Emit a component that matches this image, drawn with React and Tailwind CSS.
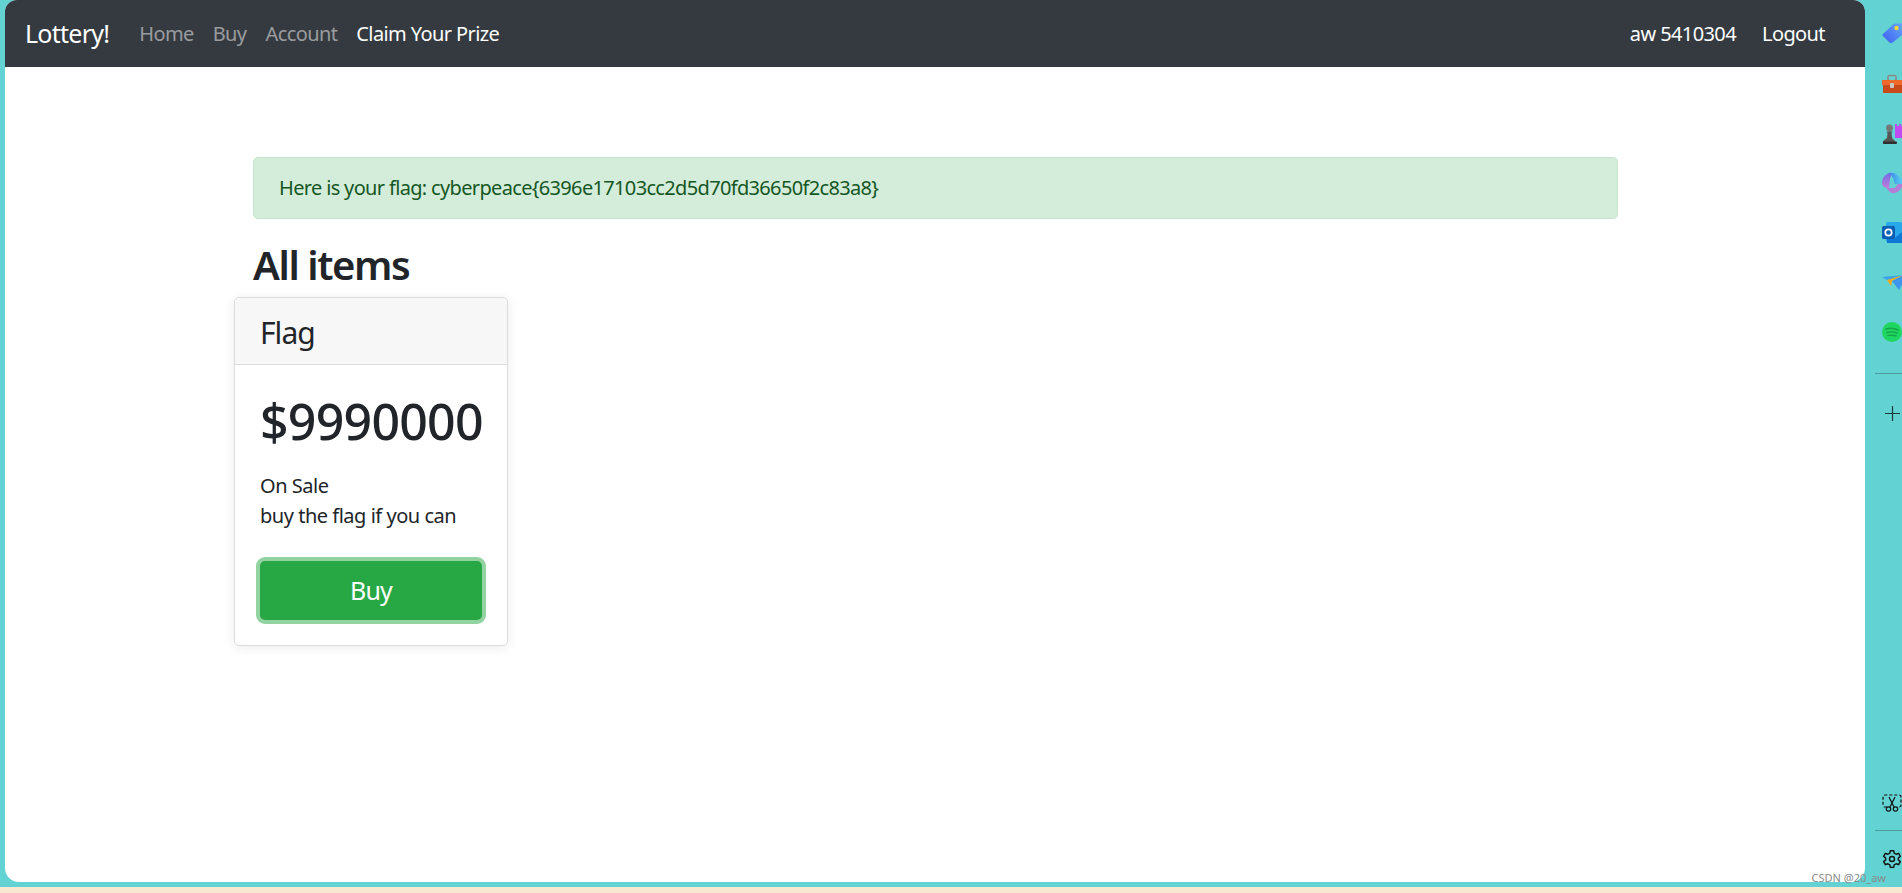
import React from "react";

const font = { fontFamily: '"Noto Sans", sans-serif' };

const TagIcon = () => (
  <svg width="20" height="20" viewBox="0 0 20 20" className="block">
    <defs>
      <linearGradient id="tagFill" x1="0" y1="1" x2="1" y2="0">
        <stop offset="0" stopColor="#3f5cf0" />
        <stop offset="1" stopColor="#62a8f8" />
      </linearGradient>
    </defs>
    <path d="M1 11 L11 1.5 Q12 .5 14 .5 L20 .5 L20 12 L10 20 Q8.5 20.5 7.5 19.5 L1 13 Q0 12 1 11Z" fill="url(#tagFill)" />
    <circle cx="14.5" cy="5" r="2.2" fill="#f7d53b" />
  </svg>
);

const ToolboxIcon = () => (
  <svg width="20" height="20" viewBox="0 0 20 20" className="block">
    <path d="M6 6 V3 Q6 1.5 7.5 1.5 H12.5 Q14 1.5 14 3 V6" fill="none" stroke="#8d8a88" strokeWidth="1.6" />
    <rect x="0" y="6" width="20" height="5" fill="#ef6a2a" />
    <rect x="1" y="11" width="19" height="8" fill="#c94b1b" />
    <rect x="8" y="9" width="4" height="5" rx="1" fill="#c9c6c4" />
  </svg>
);

const ChessIcon = () => (
  <svg width="22" height="22" viewBox="0 0 22 22" className="block">
    <path d="M13 2 L15 2 L15 4 L17 4 L17 2 L19 2 L19 4 L21 4 L22 2 V16 H13 Z" fill="#c14bf2" />
    <circle cx="7.5" cy="6" r="3.4" fill="#777" />
    <path d="M4.5 9.5 H10.5 L9.5 11 L10 16 L13 19 V22 H1 V19 L5 16 L5.5 11 Z" fill="#565656" />
    <rect x="1" y="19.5" width="14" height="2.5" rx="1" fill="#303030" />
  </svg>
);

const CopilotIcon = () => (
  <svg width="21" height="22" viewBox="0 0 21 22" className="block">
    <defs>
      <linearGradient id="copA" x1="0" y1="0" x2="0" y2="1">
        <stop offset="0" stopColor="#6f6fe8" />
        <stop offset="1" stopColor="#c27ad6" />
      </linearGradient>
      <linearGradient id="copB" x1="0" y1="0" x2="1" y2="0">
        <stop offset="0" stopColor="#3f8be8" />
        <stop offset="1" stopColor="#58d3f2" />
      </linearGradient>
    </defs>
    <path d="M0 11 Q0 5 5 2 Q8 0 10 1 L8 7 L7 16 Q0 16 0 11Z" fill="url(#copA)" />
    <path d="M8 1 Q12 0 15 3 L21 8 V12 H13 L11 6Z" fill="url(#copB)" />
    <path d="M4 16 H13 L16 12 H21 Q19 19 13 21 Q10 22 8 20Z" fill="#b37ed8" />
  </svg>
);

const OutlookIcon = () => (
  <svg width="20" height="21" viewBox="0 0 20 21" className="block">
    <rect x="4" y="0" width="16" height="19" rx="1.5" fill="#28a8ea" />
    <path d="M4 12 L13 16 L20 10 V21 H5 Z" fill="#0f78d4" />
    <rect x="0" y="4" width="13" height="13" rx="1.5" fill="#0a5fb4" />
    <circle cx="6.5" cy="10.5" r="3.2" fill="none" stroke="#fff" strokeWidth="1.7" />
  </svg>
);

const PlaneIcon = () => (
  <svg width="22" height="16" viewBox="0 0 22 16" className="block">
    <path d="M0 2 L22 0 L5 5 Z" fill="#3aa3ef" />
    <path d="M22 0 L5 5 L9 11 L10 6 Z" fill="#f0a81e" />
    <path d="M22 0 L10 6 L17 15 L22 6 Z" fill="#3d96ec" />
  </svg>
);

const SpotifyIcon = () => (
  <svg width="20" height="20" viewBox="0 0 20 20" className="block">
    <circle cx="10" cy="10" r="10" fill="#1ed760" />
    <path d="M4 7 Q10 5 16 8 M5 10.5 Q10 9 15 11 M6 13.5 Q10 12.5 14 14" fill="none" stroke="#17a34a" strokeWidth="1.4" strokeLinecap="round" />
  </svg>
);

const PlusIcon = () => (
  <svg width="15" height="15" viewBox="0 0 15 15" className="block">
    <path d="M7.5 0 V15 M0 7.5 H15" stroke="#1d3a3a" strokeWidth="1.2" />
  </svg>
);

const SnipIcon = () => (
  <svg width="20" height="19" viewBox="0 0 20 19" className="block" fill="none" stroke="#111" strokeWidth="1.2">
    <path d="M5 13 H3 Q1 13 1 11 V3 Q1 1 3 1 H17 Q19 1 19 3 V11 Q19 13 17 13 H15" strokeDasharray="3 2" />
    <path d="M7 3 L12 13 M13 3 L8 13" />
    <circle cx="6.5" cy="15" r="2.2" />
    <circle cx="13.5" cy="15" r="2.2" />
  </svg>
);

const GearIcon = () => (
  <svg width="20" height="20" viewBox="0 0 24 24" className="block" fill="none" stroke="#111" strokeWidth="1.7" strokeLinejoin="round">
    <path d="M10 2 H14 L14.6 5 L17 6.3 L20 5.2 L22 8.8 L19.6 10.8 V13.2 L22 15.2 L20 18.8 L17 17.7 L14.6 19 L14 22 H10 L9.4 19 L7 17.7 L4 18.8 L2 15.2 L4.4 13.2 V10.8 L2 8.8 L4 5.2 L7 6.3 L9.4 5 Z" />
    <circle cx="12" cy="12" r="3" />
  </svg>
);

const Sidebar = () => (
  <aside className="w-[37px] h-[887px] bg-[#62d2d2] overflow-hidden flex flex-col shrink-0">
    <div className="flex flex-col pl-[17px]">
      <div className="h-[23px]" />
      <div className="h-[51px]"><TagIcon /></div>
      <div className="h-[48px]"><ToolboxIcon /></div>
      <div className="h-[50px]"><ChessIcon /></div>
      <div className="h-[50px]"><CopilotIcon /></div>
      <div className="h-[53px]"><OutlookIcon /></div>
      <div className="h-[47px]"><PlaneIcon /></div>
      <div className="h-[51px]"><SpotifyIcon /></div>
    </div>
    <div className="h-px ml-[10px] bg-[#4a9a9c]" />
    <div className="pl-[20px] pt-[32px]"><PlusIcon /></div>
    <div className="mt-auto pl-[17px] pb-[18px] flex flex-col">
      <SnipIcon />
      <div className="h-px -ml-[7px] mt-[17px] mb-[18px] bg-[#4a9a9c]" />
      <GearIcon />
    </div>
  </aside>
);

const Navbar = () => (
  <nav className="h-[67px] bg-[#343a40] flex items-center pl-[20px] pr-[40px] text-[20px] tracking-[-0.03em]">
    <a className="text-[25px] text-white mr-[30px] tracking-[-0.03em]">Lottery!</a>
    <div className="flex gap-[19px]">
      <a className="text-white/50">Home</a>
      <a className="text-white/50">Buy</a>
      <a className="text-white/50">Account</a>
      <a className="text-white">Claim Your Prize</a>
    </div>
    <div className="ml-auto flex gap-[26px] text-white">
      <a>aw 5410304</a>
      <a>Logout</a>
    </div>
  </nav>
);

const ItemCard = () => (
  <div className="w-[274px] -ml-[19px] bg-white border border-[#dcdcdc] rounded-[5px] shadow-[0_2px_12px_rgba(0,0,0,0.08)] text-[#212529]">
    <div className="h-[67px] bg-[#f7f7f7] border-b border-[#dcdcdc] rounded-t-[5px] flex items-center pl-[25px] pt-[2px] text-[30px] tracking-[-0.032em]">
      Flag
    </div>
    <div className="px-[25px] pt-[26px] pb-[25px]">
      <h1 className="text-[50px] leading-[60px] font-medium tracking-[-0.015em] whitespace-nowrap">$9990000</h1>
      <ul className="mt-[20px] text-[20px] leading-[30px] tracking-[-0.024em] whitespace-nowrap">
        <li>On Sale</li>
        <li>buy the flag if you can</li>
      </ul>
      <button className="block w-[222px] h-[59px] mt-[30px] pt-[1px] bg-[#28a745] text-white text-[25px] tracking-[-0.032em] rounded-[5px] ring-4 ring-[#93d3a2]">
        Buy
      </button>
    </div>
  </div>
);

export default function App() {
  return (
    <div style={font} className="w-[1902px] h-[893px] overflow-hidden relative bg-[#f8e8d2]">
      <div className="flex h-[887px] bg-[#62d2d2]">
        <div className="w-[5px] shrink-0" />
        <div className="w-[1860px] h-[882px] bg-white rounded-t-[12px] rounded-b-[14px] overflow-hidden shrink-0">
          <Navbar />
          <main className="w-[1365px] ml-[248px] pt-[90px]">
            <div className="h-[62px] bg-[#d4edda] border border-[#c3e6cb] rounded-[5px] text-[#155724] text-[20px] tracking-[-0.033em] flex items-center pl-[25px]">
              Here is your flag: cyberpeace{"{"}6396e17103cc2d5d70fd36650f2c83a8{"}"}
            </div>
            <h2 className="mt-[22px] mb-[8px] text-[40px] leading-[48px] font-semibold tracking-[-0.035em] text-[#212529]">All items</h2>
            <ItemCard />
          </main>
        </div>
        <Sidebar />
      </div>
      <span className="absolute right-[16px] bottom-[8px] text-[11px] leading-[14px] text-[#8a8a8a]">CSDN @20_aw</span>
    </div>
  );
}
